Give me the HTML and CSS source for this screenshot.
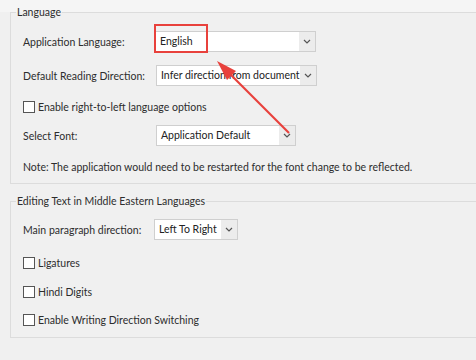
FILE: index.html
```html
<!DOCTYPE html>
<html>
<head>
<meta charset="utf-8">
<link rel="stylesheet" href="styles.css">
</head>
<body>
<div class="page">
  <fieldset class="group group-lang">
    <legend>Language</legend>
    <div class="row r1">
      <span class="label">Application Language:</span>
      <div class="select w-lang"><span class="value">English</span><span class="chev"><svg width="8" height="5" viewBox="0 0 8 5"><path d="M1 1 L4 4 L7 1" fill="none" stroke="#555" stroke-width="1.2"/></svg></span></div>
    </div>
    <div class="row r2">
      <span class="label">Default Reading Direction:</span>
      <div class="select w-dir"><span class="value">Infer direction from document</span><span class="chev"><svg width="8" height="5" viewBox="0 0 8 5"><path d="M1 1 L4 4 L7 1" fill="none" stroke="#555" stroke-width="1.2"/></svg></span></div>
    </div>
    <div class="row r3">
      <span class="check"></span><span class="ctext">Enable right-to-left language options</span>
    </div>
    <div class="row r4">
      <span class="label">Select Font:</span>
      <div class="select w-font"><span class="value">Application Default</span><span class="chev"><svg width="8" height="5" viewBox="0 0 8 5"><path d="M1 1 L4 4 L7 1" fill="none" stroke="#555" stroke-width="1.2"/></svg></span></div>
    </div>
    <div class="row r5">
      <span class="note">Note: The application would need to be restarted for the font change to be reflected.</span>
    </div>
  </fieldset>

  <fieldset class="group group-me">
    <legend>Editing Text in Middle Eastern Languages</legend>
    <div class="row m1">
      <span class="label">Main paragraph direction:</span>
      <div class="select w-main"><span class="value">Left To Right</span><span class="chev"><svg width="8" height="5" viewBox="0 0 8 5"><path d="M1 1 L4 4 L7 1" fill="none" stroke="#555" stroke-width="1.2"/></svg></span></div>
    </div>
    <div class="row m2">
      <span class="check"></span><span class="ctext">Ligatures</span>
    </div>
    <div class="row m3">
      <span class="check"></span><span class="ctext">Hindi Digits</span>
    </div>
    <div class="row m4">
      <span class="check"></span><span class="ctext">Enable Writing Direction Switching</span>
    </div>
  </fieldset>

  <div class="highlight"></div>
  <svg class="pointer" width="476" height="360" viewBox="0 0 476 360">
    <line x1="289" y1="133" x2="226" y2="70" stroke="#e8413c" stroke-width="2.2"/>
    <polygon points="217,61 236,71 227,80" fill="#e8413c"/>
  </svg>
</div>
</body>
</html>
```

FILE: styles.css
```css
html, body {
  margin: 0;
  padding: 0;
}
body {
  width: 476px;
  height: 360px;
  overflow: hidden;
  background: #f0f0f0;
  font-family: "Lato", "Noto Sans", sans-serif;
  font-size: 10.5px;
  color: #2d2d2d;
}
.page {
  position: relative;
  width: 476px;
  height: 360px;
  overflow: hidden;
  background: linear-gradient(#f5f5f5 0 12px, #f0f0f0 12px);
}
.group {
  margin: 0 -30px 0 10px;
  padding: 0 0 0 12px;
  border: 1px solid #dcdcdc;
  min-width: 0;
}
.group-lang {
  margin-top: 4px;
  padding-bottom: 6px;
}
.group-me {
  margin-top: 9px;
  padding-bottom: 7px;
}
legend {
  padding: 0 1px;
  margin-left: -7px;
  line-height: 16px;
  height: 16px;
  white-space: nowrap;
}
.row {
  display: flex;
  align-items: center;
  height: 21px;
  white-space: nowrap;
}
.r1 { margin-top: 11px; }
.r2 { margin-top: 13px; }
.r3 { margin-top: 10px; }
.r4 { margin-top: 8px; }
.r5 { margin-top: 10px; }
.m1 { margin-top: 10px; }
.m2 { margin-top: 12px; }
.m3 { margin-top: 8px; }
.m4 { margin-top: 7px; }
.label {
  width: 132px;
  flex: none;
}
.m1 .label { width: 131px; }
.select {
  box-sizing: border-box;
  height: 21px;
  display: flex;
  flex: none;
  border: 1px solid #cfcfcf;
  background: #fff;
}
.value {
  flex: 1;
  padding-left: 4px;
  line-height: 19px;
  white-space: nowrap;
  overflow: hidden;
  color: #222;
}
.chev {
  width: 16px;
  flex: none;
  background: #ececec;
  display: flex;
  align-items: center;
  justify-content: center;
}
.w-lang { width: 161px; }
.w-dir { width: 161px; margin-left: 1px; }
.w-font { width: 140px; margin-left: 1px; }
.w-main { width: 84px; }
.check {
  box-sizing: border-box;
  width: 12px;
  height: 12px;
  border: 1px solid #555;
  background: #fff;
  flex: none;
  margin-right: 3px;
}
.highlight {
  position: absolute;
  left: 154px;
  top: 24px;
  width: 50px;
  height: 25px;
  border: 2px solid #e8413c;
}
.pointer {
  position: absolute;
  left: 0;
  top: 0;
}
```
